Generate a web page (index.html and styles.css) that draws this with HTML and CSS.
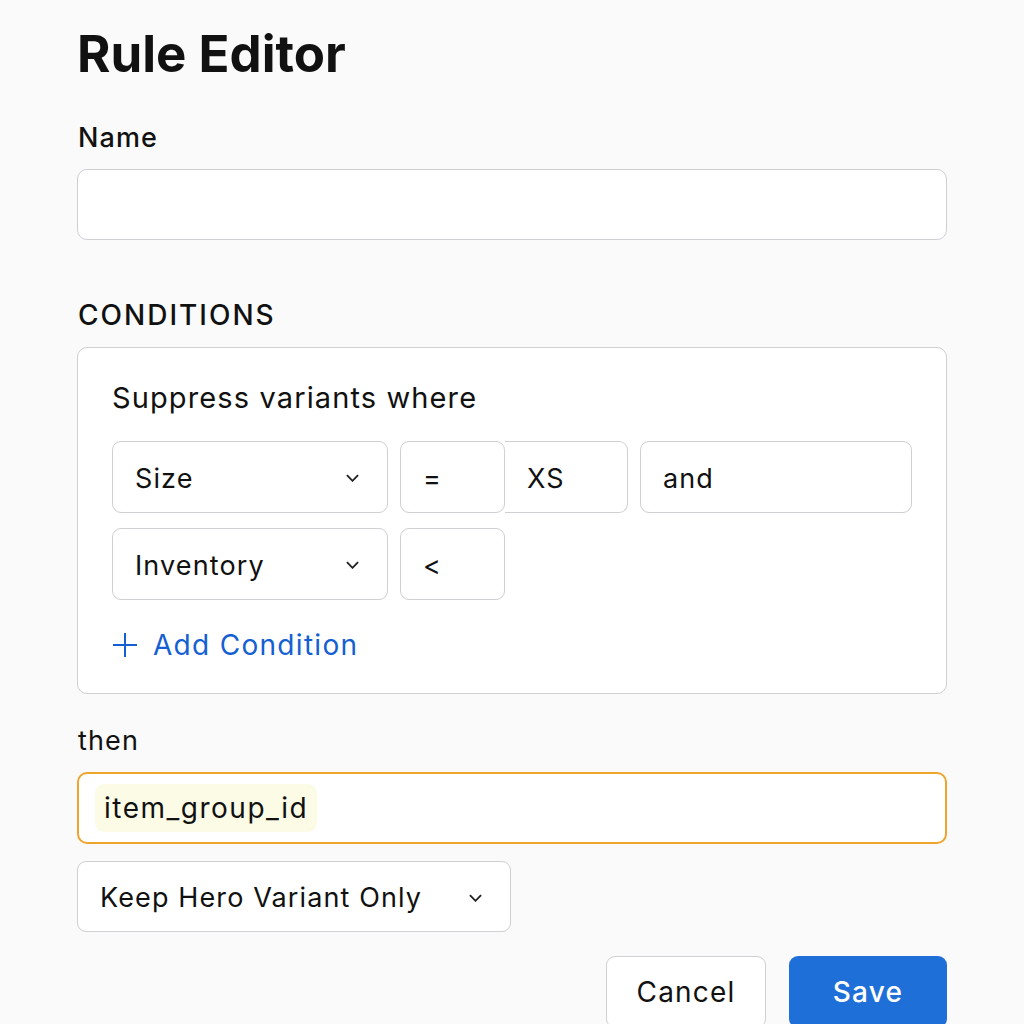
FILE: index.html
```html
<!DOCTYPE html>
<html lang="en">
<head>
  <meta charset="UTF-8">
  <meta name="viewport" content="width=device-width, initial-scale=1.0">
  <title>Rule Editor</title>
  <link rel="stylesheet" href="styles.css">
</head>
<body>
  <main class="editor">
    <h1>Rule Editor</h1>

    <label class="label" for="nombre">Name</label>
    <input class="campo" id="nombre" type="text">

    <h2 class="seccion">CONDITIONS</h2>
    <div class="condiciones">
      <p class="intro">Suppress variants where</p>
      <!-- Fila 1 -->
      <div class="fila">
        <div class="caja selector atributo">Size
          <svg class="chevron" viewBox="0 0 14 8"><path d="M1 1l6 6 6-6"/></svg>
        </div>
        <div class="caja operador">=</div>
        <div class="caja valor">XS</div>
        <div class="caja union">and</div>
      </div>
      <!-- Fila 2 -->
      <div class="fila">
        <div class="caja selector atributo">Inventory
          <svg class="chevron" viewBox="0 0 14 8"><path d="M1 1l6 6 6-6"/></svg>
        </div>
        <div class="caja operador">&lt;</div>
      </div>
      <div class="agregar">
        <svg class="mas" viewBox="0 0 24 24"><path d="M12 0v24M0 12h24"/></svg>
        Add Condition
      </div>
    </div>

    <p class="label entonces">then</p>
    <div class="campo resaltado">
      <span class="chip">item_group_id</span>
    </div>

    <div class="caja selector accion">Keep Hero Variant Only
      <svg class="chevron" viewBox="0 0 14 8"><path d="M1 1l6 6 6-6"/></svg>
    </div>

    <div class="botones">
      <button class="boton cancelar">Cancel</button>
      <button class="boton guardar">Save</button>
    </div>
  </main>
</body>
</html>
```

FILE: styles.css
```css
* {
  box-sizing: border-box;
}
body {
  font-family: Inter, "Noto Sans", sans-serif;
  background-color: #fafafa;
  color: #111;
  margin: 0;
  padding: 0;
  letter-spacing: 0.07em;
}
.editor {
  width: 870px;
  margin-left: 77px;
  padding-top: 24px;
}
h1 {
  font-size: 51px;
  font-weight: 700;
  letter-spacing: 0;
  margin: 0;
  line-height: 60px;
}
.label {
  display: block;
  font-size: 27px;
  font-weight: 500;
  margin: 38px 0 15px 1px;
  line-height: 32px;
}
.campo {
  display: block;
  width: 100%;
  height: 71px;
  background: #fff;
  border: 1.5px solid #cfcfd4;
  border-radius: 10px;
  font-family: inherit;
}
.seccion {
  font-size: 28px;
  font-weight: 500;
  letter-spacing: 2px;
  margin: 58px 0 15px 1px;
  line-height: 34px;
}
.condiciones {
  background: #fff;
  border: 1.5px solid #cfcfd4;
  border-radius: 10px;
  padding: 32px 34px 20px;
  height: 347px;
}
.intro {
  font-size: 29px;
  margin: 0 0 25px;
  line-height: 36px;
}
.fila {
  display: flex;
  gap: 12px;
  margin-bottom: 15px;
}
.caja {
  display: flex;
  align-items: center;
  height: 72px;
  background: #fff;
  border: 1.5px solid #cfcfd4;
  border-radius: 9px;
  font-size: 27px;
  padding-left: 22px;
  padding-top: 2px;
}
.selector {
  justify-content: space-between;
  padding-right: 28px;
}
.atributo {
  width: 276px;
}
.operador {
  width: 105px;
  position: relative;
  z-index: 1;
}
.valor {
  width: 123px;
  margin-left: -12px;
  border-left: none;
  border-radius: 0 9px 9px 0;
}
.union {
  width: 272px;
}
.chevron {
  width: 13px;
  height: 8px;
  fill: none;
  stroke: #222;
  stroke-width: 2;
}
.agregar {
  display: flex;
  align-items: center;
  gap: 16px;
  color: #1460d2;
  font-size: 28px;
  line-height: 34px;
  letter-spacing: 1.3px;
  margin-top: 28px;
  margin-left: 1px;
}
.mas {
  width: 24px;
  height: 24px;
  stroke: #1460d2;
  stroke-width: 2;
}
.entonces {
  font-weight: 400;
  margin: 31px 0 15px 1px;
}
.resaltado {
  height: 72px;
  border: 2px solid #eda52c;
  display: flex;
  align-items: center;
  padding-left: 16px;
}
.chip {
  background: #fcfce6;
  border-radius: 9px;
  font-size: 28px;
  letter-spacing: 1.5px;
  padding: 8px 9px;
  line-height: 32px;
}
.accion {
  width: 434px;
  height: 71px;
  margin-top: 17px;
  padding-right: 28px;
}
.botones {
  display: flex;
  justify-content: flex-end;
  gap: 23px;
  margin-top: 24px;
}
.boton {
  font-family: inherit;
  font-size: 28px;
  letter-spacing: 1.2px;
  height: 72px;
  border-radius: 9px;
  cursor: pointer;
}
.cancelar {
  width: 160px;
  background: #fff;
  border: 1.5px solid #cfcfd4;
  color: #111;
}
.guardar {
  width: 158px;
  background: #1f6fd8;
  border: none;
  color: #fff;
  font-weight: 500;
}
```
